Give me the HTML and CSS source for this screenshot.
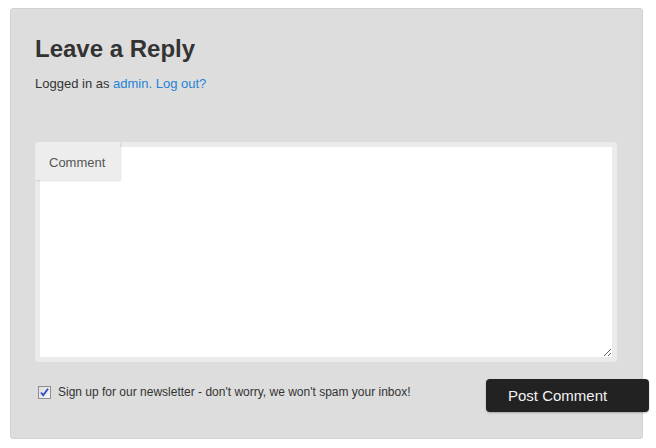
FILE: index.html
```
<!DOCTYPE html>
<html>
<head>
<meta charset="utf-8">
<link rel="stylesheet" href="styles.css">
</head>
<body>
<div class="panel">
  <h3 class="title">Leave a Reply</h3>
  <p class="logged">Logged in as <a href="#">admin.</a> <a href="#">Log out?</a></p>
  <div class="field">
    <label class="field-label" for="comment">Comment</label>
    <textarea id="comment" class="field-input"></textarea>
  </div>
  <div class="actions">
    <label class="signup">
      <span class="box"><svg width="11" height="11" viewBox="0 0 11 11"><path d="M2 5.5 L4.2 8.2 L9 1.8" fill="none" stroke="#2a4cc4" stroke-width="1.8"/></svg></span>
      <span>Sign up for our newsletter - don't worry, we won't spam your inbox!</span>
    </label>
    <button class="submit">Post Comment</button>
  </div>
</div>
</body>
</html>
```
FILE: styles.css
```
html, body {
  margin: 0;
  padding: 0;
  background: #ffffff;
  font-family: "Liberation Sans", Arial, sans-serif;
  color: #333333;
}
.panel {
  box-sizing: border-box;
  width: 633px;
  margin: 8px 0 0 10px;
  padding: 26px 25px 26px 24px;
  background: #dddddd;
  border: 1px solid #d2d2d2;
  border-radius: 3px;
}
.title {
  margin: 0;
  font-size: 24px;
  line-height: 28px;
  font-weight: bold;
  color: #333333;
}
.logged {
  margin: 13px 0 0;
  font-size: 13px;
  line-height: 16px;
  color: #333333;
}
.logged a {
  color: #2383d5;
  text-decoration: none;
}
.field {
  position: relative;
  margin-top: 50px;
  padding: 5px;
  background: #ebebeb;
  border-radius: 4px;
  height: 210px;
}
.field-input {
  display: block;
  box-sizing: border-box;
  width: 572px;
  height: 210px;
  margin: 0;
  border: none;
  outline: none;
  background: #ffffff;
  resize: vertical;
}
.field-label {
  position: absolute;
  top: 0;
  left: 0;
  box-sizing: border-box;
  width: 85px;
  height: 38px;
  padding: 3px 0 0 14px;
  line-height: 35px;
  font-size: 13px;
  color: #555555;
  background: #ededed;
  border-radius: 4px 0 0 0;
  box-shadow: 1px 1px 2px rgba(0, 0, 0, 0.12);
}
.actions {
  display: flex;
  justify-content: space-between;
  align-items: flex-start;
  margin-top: 17px;
  margin-right: -32px;
}
.signup {
  display: flex;
  align-items: center;
  gap: 7px;
  margin-top: 5px;
  margin-left: 3px;
  font-size: 12px;
  line-height: 16px;
  color: #333333;
}
.box {
  box-sizing: border-box;
  display: flex;
  align-items: center;
  justify-content: center;
  width: 13px;
  height: 13px;
  border: 1px solid #8e8f8f;
  background: linear-gradient(135deg, #dcdcdc, #f8f8f8);
}
.submit {
  box-sizing: border-box;
  width: 163px;
  height: 33px;
  padding: 0 0 0 22px;
  text-align: left;
  font-family: "Liberation Sans", Arial, sans-serif;
  font-size: 15px;
  color: #f2f2f2;
  background: #222222;
  border: none;
  border-radius: 4px;
  box-shadow: 0 1px 2px rgba(0, 0, 0, 0.25);
}
```
